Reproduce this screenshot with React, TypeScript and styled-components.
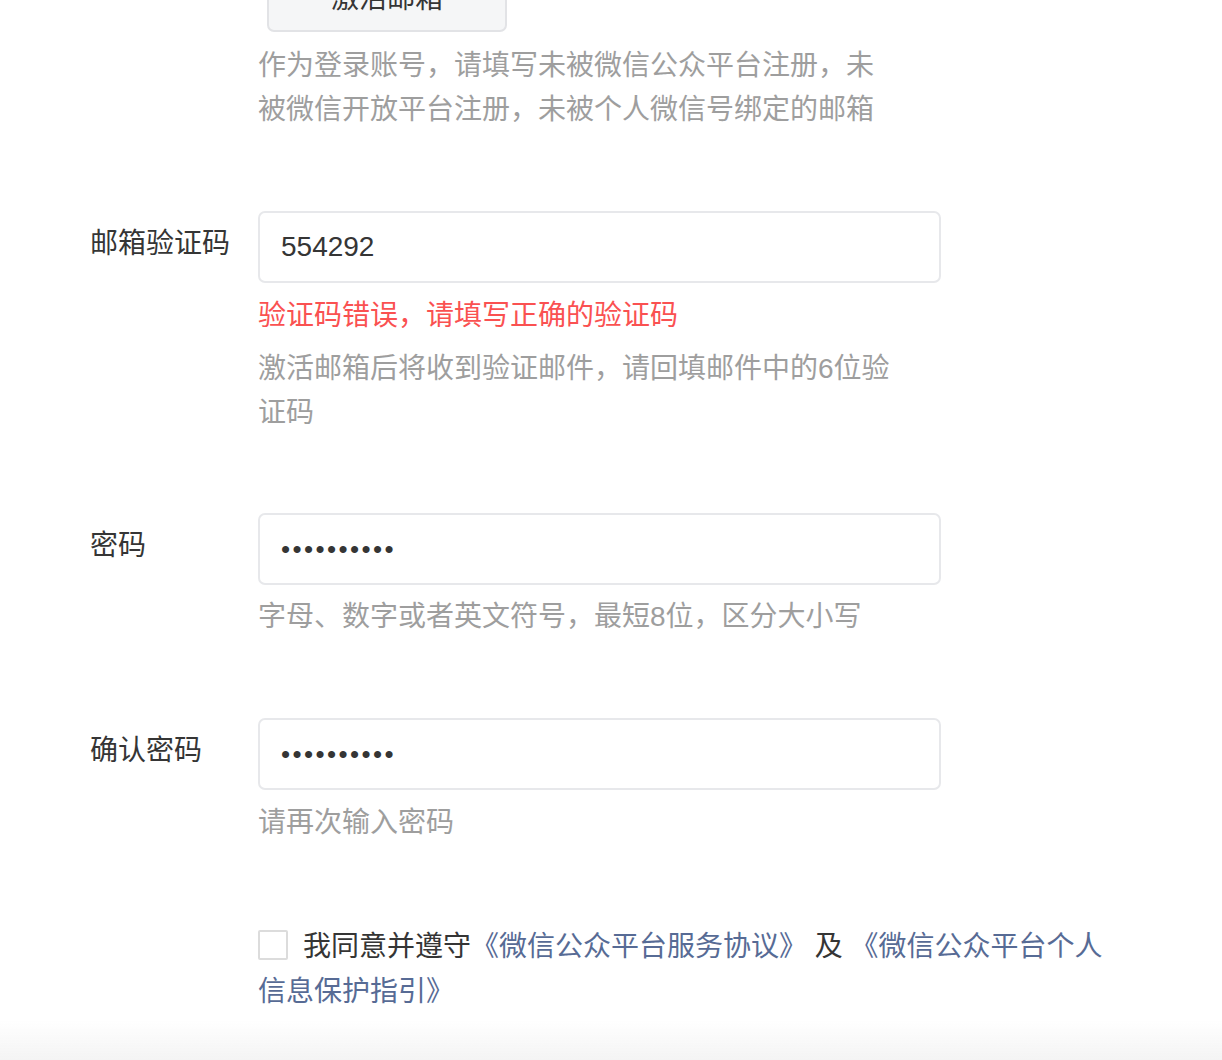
import styled, { createGlobalStyle } from 'styled-components'

const GlobalStyle = createGlobalStyle`
  html, body {
    margin: 0;
    padding: 0;
    background: #ffffff;
  }
  body {
    font-family: "Liberation Sans", "Noto Sans CJK SC", sans-serif;
    color: #353535;
    overflow: hidden;
  }
`

const Page = styled.div`
  width: 1222px;
  height: 1060px;
  overflow: hidden;
  padding-left: 90px;
  box-sizing: border-box;
`

const Form = styled.div`
  margin-top: -40px;
  display: flex;
  flex-direction: column;
`

const Row = styled.div<{ $gap?: number }>`
  display: grid;
  grid-template-columns: 168px 683px;
  margin-bottom: ${(p) => p.$gap ?? 79}px;
`

const Label = styled.div`
  font-size: 28px;
  line-height: 44px;
  padding-top: 11px;
  color: #353535;
  white-space: nowrap;
`

const Field = styled.div`
  display: flex;
  flex-direction: column;
`

const Input = styled.input`
  box-sizing: border-box;
  width: 683px;
  height: 72px;
  border: 2px solid #e7e8eb;
  border-radius: 7px;
  padding: 0 21px;
  font-family: "Liberation Sans", "Noto Sans CJK SC", sans-serif;
  font-size: 28px;
  color: #353535;
  background: #fff;
  outline: none;
  &[type='password'] {
    letter-spacing: 2.4px;
    font-size: 26px;
  }
`

const Button = styled.button`
  box-sizing: border-box;
  width: 240px;
  height: 72px;
  margin-left: 9px;
  border: 2px solid #e2e3e6;
  border-radius: 7px;
  background: #f5f6f7;
  font-family: "Liberation Sans", "Noto Sans CJK SC", sans-serif;
  font-size: 28px;
  color: #353535;
  padding: 0;
`

const Note = styled.div<{ $error?: boolean; $mt?: number }>`
  margin-top: ${(p) => p.$mt ?? 9}px;
  max-width: 640px;
  font-size: 28px;
  line-height: 44px;
  color: ${(p) => (p.$error ? '#fa5151' : '#9e9e9e')};
`

const Agreement = styled.div`
  margin-left: 168px;
  width: 860px;
  font-size: 28px;
  line-height: 45px;
  color: #353535;
`

const Check = styled.span`
  display: inline-block;
  box-sizing: border-box;
  width: 30px;
  height: 30px;
  border: 2px solid #dcdcdc;
  border-radius: 2px;
  background: #fff;
  vertical-align: -4px;
  margin-right: 15px;
`

const Link = styled.a`
  color: #576b95;
  text-decoration: none;
`

const BottomShade = styled.div`
  position: fixed;
  left: 0;
  right: 0;
  bottom: 0;
  height: 40px;
  background: linear-gradient(to bottom, rgba(245, 245, 245, 0), #f4f4f4);
  pointer-events: none;
`

export default function App() {
  return (
    <>
      <GlobalStyle />
      <Page>
        <Form>
          <Row>
            <Label />
            <Field>
              <div>
                <Button>激活邮箱</Button>
              </div>
              <Note $mt={12}>
                作为登录账号，请填写未被微信公众平台注册，未被微信开放平台注册，未被个人微信号绑定的邮箱
              </Note>
            </Field>
          </Row>
          <Row $gap={78}>
            <Label>邮箱验证码</Label>
            <Field>
              <Input defaultValue="554292" />
              <Note $error $mt={11}>
                验证码错误，请填写正确的验证码
              </Note>
              <Note>激活邮箱后将收到验证邮件，请回填邮件中的6位验证码</Note>
            </Field>
          </Row>
          <Row>
            <Label>密码</Label>
            <Field>
              <Input type="password" defaultValue="1234567890" />
              <Note $mt={10}>字母、数字或者英文符号，最短8位，区分大小写</Note>
            </Field>
          </Row>
          <Row>
            <Label>确认密码</Label>
            <Field>
              <Input type="password" defaultValue="1234567890" />
              <Note $mt={11}>请再次输入密码</Note>
            </Field>
          </Row>
          <Agreement>
            <Check />
            我同意并遵守<Link>《微信公众平台服务协议》</Link> 及 <Link>《微信公众平台个人信息保护指引》</Link>
          </Agreement>
        </Form>
      </Page>
      <BottomShade />
    </>
  )
}
